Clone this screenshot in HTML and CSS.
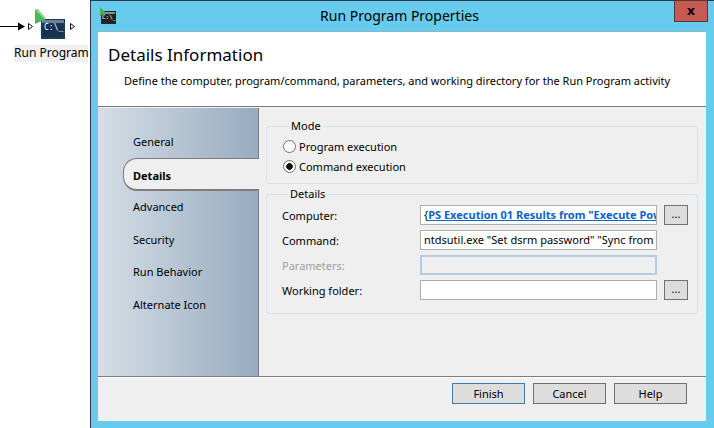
FILE: index.html
```html
<!DOCTYPE html>
<html lang="en">
<head>
<meta charset="utf-8">
<title>Run Program Properties</title>
<link rel="stylesheet" href="styles.css">
</head>
<body>
<div class="canvas-node">
  <svg class="node-art" width="90" height="42" viewBox="0 0 90 42">
    <rect x="0" y="26" width="20" height="1" fill="#000"/>
    <path d="M18 22.5 L25 26.5 L18 30.5 Z" fill="#000"/>
    <path d="M28.500 23.500 L32.500 26.500 L28.500 29.500 Z M70.500 23.500 L74.500 26.500 L70.500 29.500 Z" fill="#fff" stroke="#111"/>
    <rect x="41" y="19" width="24" height="20" fill="#1d3a58"/>
    <rect x="42" y="20" width="22" height="3" fill="#6c8098"/>
    <rect x="43" y="24" width="20" height="13" fill="#16304e"/>
    <path d="M35 9 L45 19.500 L35 24 Z" fill="#4cb85c"/>
    <path d="M35 9 L38 9 L45 17 L45 19.500 Z" fill="#7fd98a"/>
  </svg>
  <span class="node-term">C:\_</span>
  <span class="node-label">Run Program</span>
</div>

<section class="window">
  <header class="titlebar">
    <svg class="title-icon" width="16" height="18" viewBox="0 0 16 18">
      <rect x="1" y="4" width="15" height="13" fill="#222"/>
      <rect x="2" y="5" width="13" height="2" fill="#8a8f95"/>
      <path d="M0 0 L6 6 L0 9 Z" fill="#42b452"/>
    </svg>
    <span class="title-term">C:\_</span>
    <h1 class="title-text">Run Program Properties</h1>
    <button class="close" aria-label="Close">x</button>
  </header>

  <div class="client">
    <div class="intro">
      <h2 class="intro-title">Details Information</h2>
      <p class="intro-text">Define the computer, program/command, parameters, and working directory for the Run Program activity</p>
    </div>

    <div class="main">
      <nav class="side">
        <a class="tab">General</a>
        <a class="tab tab-active">Details</a>
        <a class="tab">Advanced</a>
        <a class="tab">Security</a>
        <a class="tab">Run Behavior</a>
        <a class="tab">Alternate Icon</a>
      </nav>

      <div class="content">
        <fieldset class="group group-mode">
          <legend>Mode</legend>
          <label class="radio"><span class="dot"></span>Program execution</label>
          <label class="radio"><span class="dot dot-on"></span>Command execution</label>
        </fieldset>

        <fieldset class="group group-details">
          <legend>Details</legend>
          <div class="rows">
            <label class="row-label">Computer:</label>
            <div class="field field-clip"><span class="brace">{</span><span class="pub">PS Execution 01 Results from "Execute PowerShell"</span></div>
            <button class="dots">...</button>

            <label class="row-label">Command:</label>
            <div class="field field-clip">ntdsutil.exe "Set dsrm password" "Sync from domain account"</div>
            <span></span>

            <label class="row-label row-off">Parameters:</label>
            <div class="field field-off"></div>
            <span></span>

            <label class="row-label">Working folder:</label>
            <div class="field"></div>
            <button class="dots">...</button>
          </div>
        </fieldset>
      </div>
    </div>

    <footer class="actions">
      <button class="btn btn-default">Finish</button>
      <button class="btn">Cancel</button>
      <button class="btn">Help</button>
    </footer>
  </div>
</section>
</body>
</html>
```
FILE: styles.css
```css
* { box-sizing: border-box; }
html, body { margin: 0; padding: 0; }
body {
  width: 714px;
  height: 428px;
  overflow: hidden;
  background: #fff;
  position: relative;
  font-family: "Noto Sans", "Liberation Sans", sans-serif;
  font-size: 11px;
  color: #000;
}
.canvas-node { position: absolute; left: 0; top: 0; width: 90px; height: 66px; }
.node-art { position: absolute; left: 0; top: 0; }
.node-term {
  position: absolute; left: 44px; top: 23px;
  font: 8px "DejaVu Sans Mono", monospace; color: #fff;
}
.node-label {
  position: absolute; left: 14px; top: 45px;
  width: 74px; height: 17px; line-height: 16px;
  background: #f0f0f0; text-align: center; font-size: 12px; white-space: nowrap;
}
.window {
  position: absolute; left: 90px; top: 0; width: 624px; height: 428px;
  background: #66cbec;
  border-left: 1px solid #2b3a42;
  border-top: 1px solid #2b3a42;
  display: flex; flex-direction: column;
}
.titlebar { height: 30px; display: flex; align-items: center; justify-content: center; position: relative; flex: none; }
.title-icon { position: absolute; left: 9px; top: 6px; }
.title-term { position: absolute; left: 11px; top: 12px; font: 6px "DejaVu Sans Mono", monospace; color: #fff; }
.title-text { margin: 0; font-size: 14px; font-weight: 400; padding-bottom: 1px; position: relative; left: -3px; }
.close {
  position: absolute; right: 6px; top: -1px; width: 34px; height: 22px; padding: 0;
  background: #c75a52; border: 1px solid #4a3a3c;
  font: 700 13px "DejaVu Sans", sans-serif; line-height: 16px; color: #000;
}
.client {
  margin: 0 8px 7px 7px; height: 390px; background: #efefef;
  display: flex; flex-direction: column;
}
.intro { height: 75px; background: #fff; padding: 11px 10px 0; border-top: 1px solid #8fb6c8; flex: none; }
.intro-title { margin: 0; font-size: 17px; font-weight: 400; line-height: 23px; }
.intro-text { margin: 8px 0 0 16px; font-size: 11px; line-height: 14px; white-space: nowrap; }
.main { display: flex; height: 271px; border-top: 1px solid #7d7d7d; border-bottom: 1px solid #7d7d7d; flex: none; padding-top: 1px; }
.side {
  width: 161px; flex: none; background: linear-gradient(90deg, #d5dee6, #98abc0);
  border-right: 1px solid #7d7d7d; padding-top: 17px;
  display: flex; flex-direction: column; align-items: stretch;
}
.tab { height: 33px; line-height: 33px; padding-left: 35px; white-space: nowrap; margin-bottom: -0.5px; }
.tab-active {
  margin-left: 25px; margin-right: -1px; padding-left: 9px; height: 33px; font-weight: 700;
  background: #efefef; position: relative; z-index: 1;
  border: 1px solid #7d7d7d; border-right: 0; border-bottom-width: 2px;
  border-radius: 14px 0 0 14px;
}
.content { flex: 1; padding: 11px 8px 0 7px; display: flex; flex-direction: column; gap: 3px; }
.group { margin: 0; border: 1px solid #d8e2ec; border-radius: 3px; padding: 0; min-width: 0; }
.group legend { padding: 0 2px; margin-left: 6px; line-height: 14px; font-size: 11px; }
.group-mode { height: 65px; padding: 6px 0 0 16px; display: flex; flex-direction: column; gap: 6px; }
.radio { display: flex; align-items: center; gap: 3px; height: 14px; }
.dot { width: 13px; height: 13px; border-radius: 50%; border: 1px solid #707070; background: #fff; display: block; flex: none; }
.dot-on { background: radial-gradient(circle, #111 0 3px, #fff 3.6px); }
.group-details { height: 127px; padding: 4px 0 0 15px; }
.rows {
  display: grid; grid-template-columns: 138px 237px 26px; column-gap: 0;
  grid-template-rows: 20px 20px 20px 20px; row-gap: 5px;
  align-items: center;
}
.row-label { white-space: nowrap; }
.row-off { color: #a0a0a0; }
.field {
  height: 20px; border: 1px solid #aeaeae; background: #fff; width: 237px;
  line-height: 18px; padding-left: 3px; white-space: nowrap;
}
.field-clip { overflow: hidden; }
.field-off { background: #efefef; border: 2px solid #b4cce4; }
.brace { font-weight: 400; }
.pub { color: #0b63c9; font-weight: 700; text-decoration: underline; }
.dots {
  width: 24px; height: 20px; margin-left: 7px; padding: 0 0 4px;
  background: #ddd; border: 1px solid #707070; font: 11px "Noto Sans", sans-serif;
}
.actions { flex: 1; display: flex; justify-content: flex-end; gap: 8px; padding: 5px 19px 0 0; border-top: 1px solid #fff; align-items: flex-start; }
.btn {
  width: 73px; height: 21px; padding: 0; background: #ddd; border: 1px solid #707070;
  font: 11px "Noto Sans", sans-serif; color: #000;
}
.btn-default { border-color: #3c7fb1; margin-right: 0; }
```
